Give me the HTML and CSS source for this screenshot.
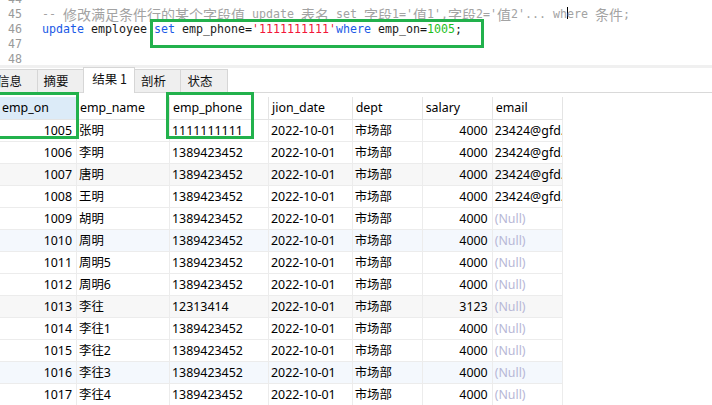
FILE: index.html
```html
<!DOCTYPE html>
<html>
<head>
<meta charset="utf-8">
<link rel="stylesheet" href="styles.css">
</head>
<body>
<div class="page">
  <div class="editor">
    <div class="line"><span class="ln">44</span><span class="code"></span></div>
    <div class="line"><span class="ln">45</span><span class="code cm">-- <span class="cjk">修改满足条件行的某个字段值</span> update <span class="cjk">表名</span> set <span class="cjk">字段</span>1='<span class="cjk">值</span>1',<span class="cjk">字段</span>2='<span class="cjk">值</span>2'... wh<span class="cursor"></span>ere <span class="cjk">条件</span>;</span></div>
    <div class="line"><span class="ln">46</span><span class="code"><span class="kw">update</span> employee <span class="kw">set</span> emp_phone=<span class="str">'1111111111'</span><span class="kw">where</span> emp_on=<span class="num">1005</span>;</span></div>
    <div class="line"><span class="ln">47</span><span class="code"></span></div>
    <div class="line"><span class="ln">48</span><span class="code"></span></div>
  </div>
  <div class="splitter"></div>
  <div class="tabs">
    <div class="tab first">信息</div>
    <div class="tab">摘要</div>
    <div class="tab active">结果 1</div>
    <div class="tab">剖析</div>
    <div class="tab">状态</div>
  </div>
  <div class="grid">
    <div class="hd sel">emp_on</div><div class="hd">emp_name</div><div class="hd">emp_phone</div><div class="hd">jion_date</div><div class="hd">dept</div><div class="hd">salary</div><div class="hd">email</div>

    <div class="c r">1005</div><div class="c">张明</div><div class="c">1111111111</div><div class="c">2022-10-01</div><div class="c">市场部</div><div class="c r">4000</div><div class="c">23424@gfd.com</div>

    <div class="c r">1006</div><div class="c">李明</div><div class="c">1389423452</div><div class="c">2022-10-01</div><div class="c">市场部</div><div class="c r">4000</div><div class="c">23424@gfd.com</div>

    <div class="c r g">1007</div><div class="c g">唐明</div><div class="c g">1389423452</div><div class="c g">2022-10-01</div><div class="c g">市场部</div><div class="c r g">4000</div><div class="c g">23424@gfd.com</div>

    <div class="c r">1008</div><div class="c">王明</div><div class="c">1389423452</div><div class="c">2022-10-01</div><div class="c">市场部</div><div class="c r">4000</div><div class="c">23424@gfd.com</div>

    <div class="c r">1009</div><div class="c">胡明</div><div class="c">1389423452</div><div class="c">2022-10-01</div><div class="c">市场部</div><div class="c r">4000</div><div class="c null">(Null)</div>

    <div class="c r b">1010</div><div class="c b">周明</div><div class="c b">1389423452</div><div class="c b">2022-10-01</div><div class="c b">市场部</div><div class="c r b">4000</div><div class="c null b">(Null)</div>

    <div class="c r">1011</div><div class="c">周明5</div><div class="c">1389423452</div><div class="c">2022-10-01</div><div class="c">市场部</div><div class="c r">4000</div><div class="c null">(Null)</div>

    <div class="c r">1012</div><div class="c">周明6</div><div class="c">1389423452</div><div class="c">2022-10-01</div><div class="c">市场部</div><div class="c r">4000</div><div class="c null">(Null)</div>

    <div class="c r g">1013</div><div class="c g">李往</div><div class="c g">12313414</div><div class="c g">2022-10-01</div><div class="c g">市场部</div><div class="c r g">3123</div><div class="c null g">(Null)</div>

    <div class="c r">1014</div><div class="c">李往1</div><div class="c">1389423452</div><div class="c">2022-10-01</div><div class="c">市场部</div><div class="c r">4000</div><div class="c null">(Null)</div>

    <div class="c r">1015</div><div class="c">李往2</div><div class="c">1389423452</div><div class="c">2022-10-01</div><div class="c">市场部</div><div class="c r">4000</div><div class="c null">(Null)</div>

    <div class="c r b">1016</div><div class="c b">李往3</div><div class="c b">1389423452</div><div class="c b">2022-10-01</div><div class="c b">市场部</div><div class="c r b">4000</div><div class="c null b">(Null)</div>

    <div class="c r">1017</div><div class="c">李往4</div><div class="c">1389423452</div><div class="c">2022-10-01</div><div class="c">市场部</div><div class="c r">4000</div><div class="c null">(Null)</div>
  </div>

  <div class="mark mark-sql"></div>
  <div class="mark mark-id"></div>
  <div class="mark mark-phone"></div>
</div>
</body>
</html>
```

FILE: styles.css
```css
* { box-sizing: border-box; }
html, body { margin: 0; padding: 0; background: #fff; }
.page {
  position: relative;
  width: 712px;
  height: 405px;
  overflow: hidden;
  font-family: "Noto Sans", "Noto Sans CJK SC", sans-serif;
  font-size: 12.4px;
  color: #000;
}

/* editor */
.editor {
  height: 65px;
  overflow: hidden;
  font-family: "DejaVu Sans Mono", "Noto Sans CJK SC", monospace;
  font-size: 11.63px;
}
.editor .line {
  display: flex;
  height: 15px;
  line-height: 15px;
  white-space: pre;
}
.editor .line:first-child { margin-top: -8px; }
.ln {
  width: 22px;
  text-align: right;
  color: #9a9a9a;
  flex: none;
}
.code { padding-left: 20px; color: #1a1a1a; }
.cm { color: #a3a3a3; }
.cjk {
  font-family: "Noto Sans CJK SC", sans-serif;
  font-size: 14px;
  line-height: 15px;
  vertical-align: top;
}
.kw { color: #1a5ae6; }
.str { color: #f21739; }
.num { color: #1dbf1d; }
.cursor {
  display: inline-block;
  width: 1px;
  height: 12px;
  margin-right: -1px;
  background: #000;
  vertical-align: -1px;
}

/* splitter + tabs */
.splitter { height: 3px; background: #f0f0f0; }
.tabs {
  display: flex;
  align-items: flex-end;
  height: 25px;
  border-bottom: 1px solid #d9d9d9;
  font-family: "Noto Sans CJK SC", sans-serif;
  font-size: 12.5px;
}
.tab {
  width: 46.6px;
  height: 23px;
  line-height: 22px;
  padding-left: 6px;
  background: #efefef;
  border-top: 1px solid #d6d6d6;
  border-right: 1px solid #d6d6d6;
  color: #111;
  flex: none;
}
.tab.first { margin-left: -9px; }
.tab.active {
  width: 51.7px;
  height: 26px;
  line-height: 22px;
  margin-left: -1px;
  margin-bottom: -1px;
  padding-left: 8px;
  background: #fff;
  border-left: 1px solid #d6d6d6;
  position: relative;
  z-index: 1;
}

/* grid */
.grid {
  display: grid;
  grid-template-columns: 77px 93px 99px 83.7px 70px 70px 70px;
  width: 562.7px;
  margin-top: 4px;
}
.hd {
  height: 23px;
  line-height: 22px;
  padding: 0 3px;
  border-right: 1px solid #e4e4e4;
  border-bottom: 1px solid #e4e4e4;
  white-space: nowrap;
  overflow: hidden;
}
.hd.sel { background: #dcebf8; padding-left: 2px; }
.c {
  height: 22px;
  line-height: 21px;
  padding: 0 3px 0 2px;
  border-right: 1px solid #ececec;
  border-bottom: 1px solid #ececec;
  white-space: nowrap;
  overflow: hidden;
}
.c.r { text-align: right; padding-right: 4px; }
.c.g { background: #f7f7f7; }
.c.b { background: #f4f8fd; }
.c.null { color: #b7b7d6; }

/* annotation boxes */
.mark {
  position: absolute;
  border: 3px solid #22b14c;
}
.mark-sql { left: 150px; top: 19px; width: 334px; height: 29px; }
.mark-id { left: -4px; top: 92px; width: 83px; height: 47px; }
.mark-phone { left: 166px; top: 92px; width: 88px; height: 47px; }
```
